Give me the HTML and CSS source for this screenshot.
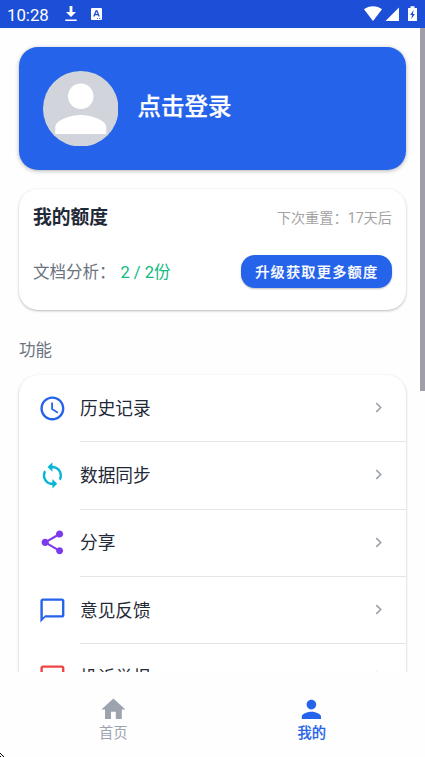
FILE: index.html
```html
<!DOCTYPE html>
<html lang="zh-CN">
<head>
<meta charset="utf-8">
<title>我的</title>
<link rel="stylesheet" href="styles.css">
</head>
<body>
<div class="app">
  <header class="status">
    <span class="time">10:28</span>
    <svg class="download" viewBox="0 0 12 16"><path d="M4.6 0h2.8v6H11L6 11 1 6h3.6zM.3 13.6h11.4v1.5H.3z" fill="#fff"/></svg>
    <svg class="keyboard" viewBox="0 0 11 12"><rect width="11" height="12" rx="1" fill="#fff"/><path d="M2.8 8.5 5.1 3h.8l2.3 5.5M3.7 6.7h3.6" fill="none" stroke="#1d4ed8" stroke-width="1.3"/><path d="M6 10h1v.8H6zM8 10h1.5v.8H8z" fill="#1d4ed8"/></svg>
    <svg class="signals" viewBox="0 0 54 16"><path d="M0 3.3C5-.8 13-.8 18 3.3L9 15z" fill="#fff"/><path d="M21.5 15H35V1.5z" fill="#fff"/><path d="M44 2h2.500V.3h4V2H53v13h-9z" fill="#fff"/><path d="m49.600 4-3.500 5h2l-.8 4 3.600-5h-2z" fill="#1d4ed8"/></svg>
  </header>
  <main class="content">
    <section class="login">
      <svg class="avatar" viewBox="0 0 24 24"><circle cx="12" cy="12" r="12" fill="#d1d5db"/><circle cx="12" cy="8" r="4.050" fill="#fff"/><path d="M12 14c-2.670 0-8.100 1.340-8.100 4v2h16.200v-2c0-2.660-5.430-4-8.100-4z" fill="#fff"/></svg>
      <span class="login-text">点击登录</span>
    </section>
    <section class="quota">
      <div class="quota-row head"><h2>我的额度</h2><span class="reset">下次重置：17天后</span></div>
      <div class="quota-row body"><div class="usage">文档分析：<span class="count">2 / 2份</span></div><button class="upgrade">升级获取更多额度</button></div>
    </section>
    <h3 class="section-title">功能</h3>
    <ul class="menu">
      <li><svg class="icon blue" viewBox="0 0 24 24"><path d="M11.990 2C6.470 2 2 6.480 2 12s4.470 10 9.990 10C17.520 22 22 17.520 22 12S17.520 2 11.990 2zM12 20c-4.420 0-8-3.580-8-8s3.580-8 8-8 8 3.580 8 8-3.580 8-8 8zm.5-13H11v6l5.250 3.150.75-1.230-4.500-2.670z"/></svg><div class="item"><span>历史记录</span><svg class="chevron" viewBox="0 0 6 10"><path d="m1 1 4 4-4 4"/></svg></div></li>
      <li><svg class="icon cyan" viewBox="0 0 24 24"><path d="M12 4V1L8 5l4 4V6c3.310 0 6 2.690 6 6 0 1.010-.25 1.970-.7 2.800l1.460 1.460C19.540 15.030 20 13.570 20 12c0-4.420-3.580-8-8-8zm0 14c-3.310 0-6-2.690-6-6 0-1.010.25-1.970.7-2.800L5.240 7.740C4.460 8.970 4 10.430 4 12c0 4.420 3.580 8 8 8v3l4-4-4-4v3z"/></svg><div class="item"><span>数据同步</span><svg class="chevron" viewBox="0 0 6 10"><path d="m1 1 4 4-4 4"/></svg></div></li>
      <li><svg class="icon purple" viewBox="0 0 24 24"><path d="M18 16.080c-.76 0-1.440.3-1.960.77L8.910 12.700c.05-.23.09-.46.09-.7s-.04-.47-.09-.7l7.050-4.110c.54.5 1.250.81 2.040.81 1.660 0 3-1.340 3-3s-1.340-3-3-3-3 1.340-3 3c0 .24.04.47.09.7L8.040 9.810C7.500 9.310 6.790 9 6 9c-1.660 0-3 1.340-3 3s1.340 3 3 3c.79 0 1.500-.31 2.040-.81l7.120 4.160c-.05.21-.08.43-.08.65 0 1.610 1.310 2.920 2.920 2.920s2.920-1.310 2.920-2.920-1.310-2.920-2.920-2.920z"/></svg><div class="item"><span>分享</span><svg class="chevron" viewBox="0 0 6 10"><path d="m1 1 4 4-4 4"/></svg></div></li>
      <li><svg class="icon blue" viewBox="0 0 24 24"><path d="M20 2H4c-1.100 0-2 .9-2 2v18l4-4h14c1.100 0 2-.9 2-2V4c0-1.100-.9-2-2-2zm0 14H6l-2 2V4h16v12z"/></svg><div class="item"><span>意见反馈</span><svg class="chevron" viewBox="0 0 6 10"><path d="m1 1 4 4-4 4"/></svg></div></li>
      <li><svg class="icon red" viewBox="0 0 24 24"><path d="M20 2H4c-1.100 0-2 .9-2 2v18l4-4h14c1.100 0 2-.9 2-2V4c0-1.100-.9-2-2-2zm0 14H6l-2 2V4h16v12z"/></svg><div class="item"><span>投诉举报</span><svg class="chevron" viewBox="0 0 6 10"><path d="m1 1 4 4-4 4"/></svg></div></li>
    </ul>
    <div class="scrollbar"></div>
  </main>
  <nav class="tabs">
    <div class="tab"><svg viewBox="0 0 24 24"><path d="M10 20v-6h4v6h5v-8h3L12 3 2 12h3v8z"/></svg><span>首页</span></div>
    <div class="tab active"><svg viewBox="0 0 24 24"><path d="M12 12c2.210 0 4-1.790 4-4s-1.790-4-4-4-4 1.790-4 4 1.790 4 4 4zm0 2c-2.670 0-8 1.340-8 4v2h16v-2c0-2.660-5.330-4-8-4z"/></svg><span>我的</span></div>
    <svg class="corner" viewBox="0 0 4 4"><path d="M0 0h1v1H0zM1 1h1v1H1zM2 2h1v1H2zM3 3h1v1H3zM0 3h1v1H0z"/></svg>
  </nav>
</div>
</body>
</html>
```

FILE: styles.css
```css
* { box-sizing: border-box; }
body { margin: 0; background: #fefefe; font-family: Roboto, "Noto Sans CJK SC", sans-serif; }
.app { width: 425px; height: 757px; display: flex; flex-direction: column; overflow: hidden; }
.status { height: 28px; flex: none; background: #1d4ed8; display: flex; align-items: center; padding: 0 7px; color: #fff; }
.time { font-size: 16.800px; line-height: 28px; width: 57.500px; padding-top: 1px; }
.download { width: 12px; height: 16px; }
.keyboard { width: 11px; height: 12px; margin-left: 14.500px; }
.signals { width: 54px; height: 16px; margin-left: auto; }
.content { flex: 1; min-height: 0; position: relative; overflow: hidden; padding: 19px 19px 0; background: #fefefe; }
.login { height: 123px; border-radius: 19px; background: #2563eb; display: flex; align-items: center; padding-left: 23.500px; box-shadow: 0 1px 4px rgba(0,0,0,.3); }
.avatar { width: 75.500px; height: 75.500px; }
.login-text { margin: 0 0 3px 19.500px; color: #fff; font-size: 23.500px; font-weight: 500; line-height: 32px; -webkit-text-stroke: .25px #fff; }
.quota { height: 120.500px; margin-top: 19px; border-radius: 19px; background: #fff; box-shadow: 0 1px 2.500px rgba(0,0,0,.28); padding: 15px 14px 0 14px; }
.quota-row { display: flex; justify-content: space-between; align-items: center; }
.head { height: 28px; }
.body { height: 33px; margin-top: 23px; }
h2 { margin: 0; color: #1f2937; font-size: 18.800px; font-weight: 700; line-height: 28px; }
.reset { color: #a3a3a3; font-size: 14.200px; padding-bottom: 3px; }
.usage { color: #6b7280; font-size: 16.500px; padding-bottom: 2px; }
.count { color: #10b981; margin-left: 5px; }
.upgrade { width: 151.500px; height: 33px; border: 0; padding: 0 0 0 1px; border-radius: 14px; background: #2563eb; color: #fff; font: 500 14.200px/32px Roboto, "Noto Sans CJK SC", sans-serif; letter-spacing: 1.200px; box-shadow: 0 1px 2px rgba(0,0,0,.25); -webkit-text-stroke: .2px #fff; }
.section-title { margin: 28.500px 0 0; height: 24px; color: #6b7280; font-size: 16.500px; font-weight: 400; line-height: 25px; }
.menu { list-style: none; margin: 13px 0 0; padding: 0; border-radius: 19px; background: #fff; box-shadow: 0 1px 2.500px rgba(0,0,0,.28); }
.menu li { height: 67.300px; display: flex; padding-left: 18.700px; }
.icon { width: 28.800px; height: 28.800px; margin-top: 18.700px; flex: none; fill: currentColor; }
.item { flex: 1; margin-left: 13.500px; display: flex; align-items: center; justify-content: space-between; border-bottom: 1px solid #e5e5e5; padding-right: 24.500px; color: #1f2937; font-size: 17.700px; }
.item span { padding-bottom: 3px; }
.chevron { width: 7px; height: 11px; fill: none; stroke: #9ca3af; stroke-width: 1.500; margin-bottom: 1px; }
.blue { color: #2563eb; }
.cyan { color: #06b6d4; }
.purple { color: #7c3aed; }
.red { color: #ef4444; }
.scrollbar { position: absolute; right: 0; top: 0; width: 5px; height: 363px; background: #a09ea6; }
.tabs { height: 85px; flex: none; position: relative; background: #fefefe; display: flex; padding: 23px 14px 0; }
.tab { flex: 1; display: flex; flex-direction: column; align-items: center; color: #9ca3af; font-size: 14.300px; line-height: 20px; }
.tab svg { width: 28.800px; height: 28.800px; fill: currentColor; margin-bottom: -.8px; }
.active { color: #2563eb; font-weight: 500; }
.active span { -webkit-text-stroke: .15px #2563eb; }
.corner { position: absolute; left: 0; bottom: 0; width: 4px; height: 4px; }
```
